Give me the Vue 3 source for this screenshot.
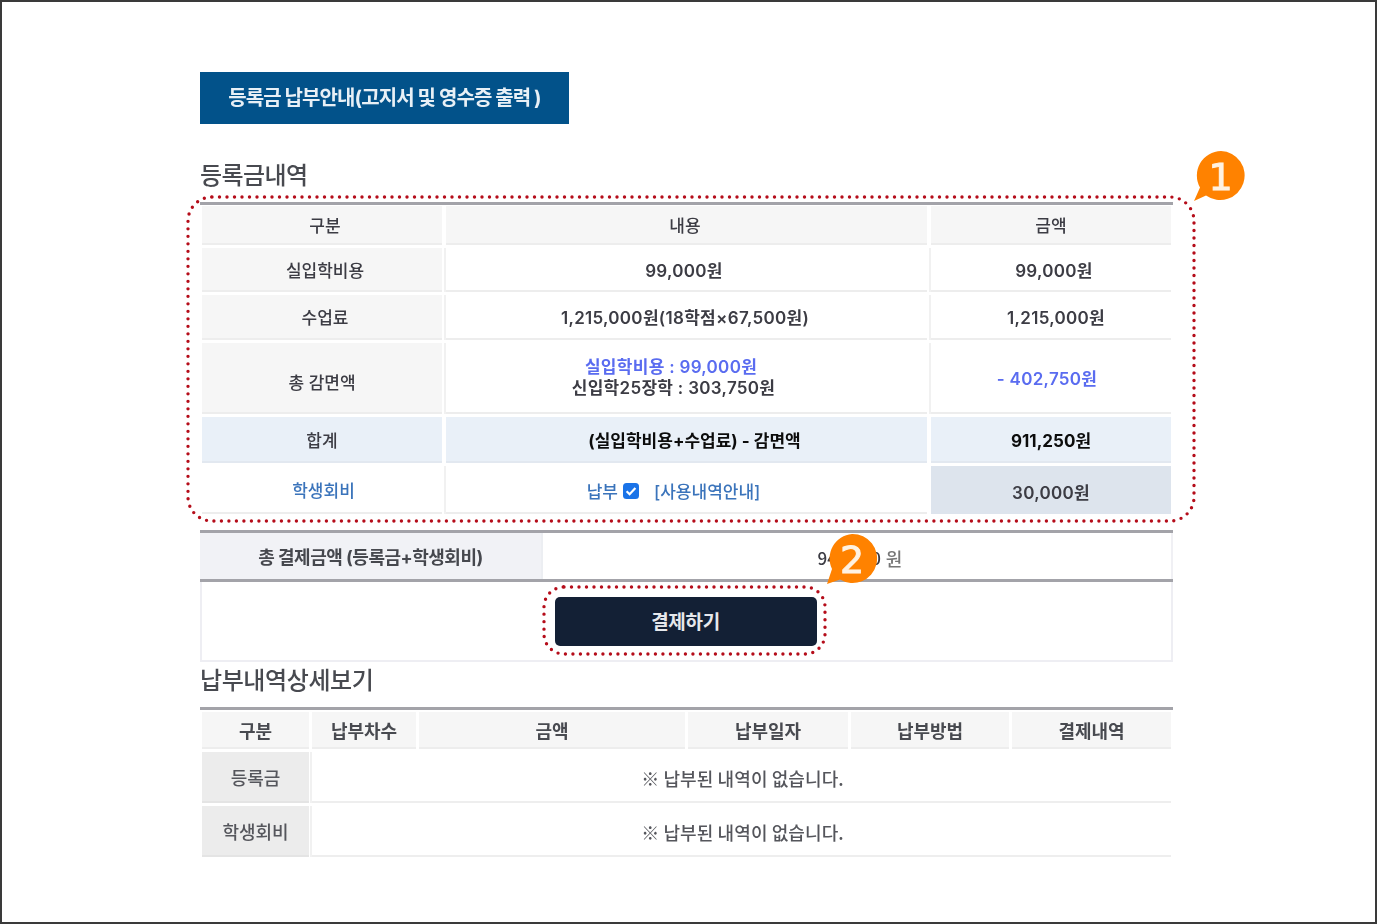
<script setup>
const feeRows = [
  { label: '실입학비용', content: '99,000원', amount: '99,000원', contentCls: 'shift-l5', amountCls: 'shift-r6' },
  { label: '수업료', content: '1,215,000원(18학점×67,500원)', amount: '1,215,000원', contentCls: 'shift-l3', amountCls: 'shift-r10' },
]
const histHead = ['구분', '납부차수', '금액', '납부일자', '납부방법', '결제내역']
</script>

<template>
  <div class="page">
    <div class="banner">등록금 납부안내(고지서 및 영수증 출력 )</div>
    <h2 class="title first">등록금내역</h2>

    <div class="fee-wrap">
      <div class="fee">
        <div class="c head shift-r6">구분</div>
        <div class="c head shift-l3">내용</div>
        <div class="c head">금액</div>
        <template v-for="row in feeRows" :key="row.label">
          <div class="c th shift-r6">{{ row.label }}</div>
          <div class="c td val" :class="row.contentCls">{{ row.content }}</div>
          <div class="c td val" :class="row.amountCls">{{ row.amount }}</div>
        </template>
        <div class="c th low">총 감면액</div>
        <div class="c td val stack">
          <span class="blue nudge">실입학비용 : 99,000원</span>
          <span>신입학25장학 : 303,750원</span>
        </div>
        <div class="c td val blue shift-l8">- 402,750원</div>
        <div class="c sum">합계</div>
        <div class="c sum strong shift-r16">(실입학비용+수업료) - 감면액</div>
        <div class="c sum strong">911,250원</div>
        <div class="c td flat link shift-r3">학생회비</div>
        <div class="c td link pay">
          <span>납부</span>
          <span class="check"><svg viewBox="0 0 16 16" width="16" height="16"><rect width="16" height="16" rx="3.500" fill="#1a73e8"/><path d="M3.600 8.200l3 3 5.800-6.200" fill="none" stroke="#fff" stroke-width="2.200"/></svg></span>
          <span class="guide">[사용내역안내]</span>
        </div>
        <div class="c shade val">30,000원</div>
      </div>
      <svg class="dots box1" width="1010" height="328" viewBox="0 0 1010 328">
        <rect x="2" y="2" width="1006" height="324" rx="24" />
      </svg>
      <svg class="bubble b1" viewBox="0 0 52 52" width="52" height="52">
        <path d="M28 1a24.500 24.500 0 1 1-15 44.500L1 51l6-13.500A24.500 24.500 0 0 1 28 1z" fill="#ff8200"/>
        <text x="27.500" y="40" text-anchor="middle" class="num">1</text>
      </svg>
    </div>

    <div class="total">
      <div class="total-label">총 결제금액 (등록금+학생회비)</div>
      <div class="total-value"><span class="dark">941,250</span><span class="won">원</span></div>
      <svg class="bubble b2" viewBox="0 0 52 52" width="52" height="52">
        <path d="M26 1a24.500 24.500 0 1 1-12 45.500L1 51l5-15A24.500 24.500 0 0 1 26 1z" fill="#ff8200"/>
        <text x="26" y="40" text-anchor="middle" class="num">2</text>
      </svg>
    </div>
    <div class="action">
      <button class="pay-btn" type="button">결제하기</button>
      <svg class="dots box2" width="285" height="71" viewBox="0 0 285 71">
        <rect x="2" y="2" width="281" height="67" rx="20" />
      </svg>
    </div>

    <h2 class="title second">납부내역상세보기</h2>
    <div class="hist">
      <div v-for="h in histHead" :key="h" class="c head soft">{{ h }}</div>
      <div class="c side">등록금</div>
      <div class="c none">※ 납부된 내역이 없습니다.</div>
      <div class="c side">학생회비</div>
      <div class="c none">※ 납부된 내역이 없습니다.</div>
    </div>
  </div>
</template>

<style>
html, body { margin: 0; background: #fff; }
</style>

<style scoped>
.page {
  box-sizing: border-box;
  width: 1377px;
  height: 924px;
  border: 2px solid #3a3a3a;
  padding: 70px 0 0 198px;
  font-family: Inter, "Noto Sans CJK KR", sans-serif;
  color: #3c3c44;
  overflow: hidden;
  filter: blur(0.35px);
}
.banner {
  width: 369px;
  height: 52px;
  background: #02528a;
  color: #e8f0f6;
  font-size: 20px;
  font-weight: 700;
  letter-spacing: -0.9px;
  line-height: 52px;
  text-align: center;
}
.title {
  margin: 0;
  font-size: 24px;
  font-weight: 500;
  line-height: 30px;
  letter-spacing: -0.6px;
  color: #484a50;
}
.title.first { margin-top: 37px; }
.fee-wrap { position: relative; width: 973px; margin-top: 11px; }
.fee {
  display: grid;
  width: 969px;
  grid-template-columns: 240px 481px 240px;
  grid-template-rows: 39px 44px 45px 71px 46px 48px;
  column-gap: 4px;
  row-gap: 3px;
  padding: 1px 2px 0;
  border-top: 3px solid #a3a3a9;
}
.c {
  display: flex;
  align-items: center;
  justify-content: center;
  box-sizing: border-box;
  font-size: 17px;
  font-weight: 500;
}
.head, .th { background: #f6f6f6; border-bottom: 2px solid #ededed; }
.td { background: #fff; border-bottom: 2px solid #ededed; box-shadow: -2px 0 0 #f1f1f1; }
.flat { box-shadow: none; }
.val { font-weight: 600; letter-spacing: 0.3px; }
.low { padding-top: 7px; }
.stack { flex-direction: column; line-height: 21px; padding-right: 26px; }
.nudge { margin-right: 5px; }
.blue { color: #5a6cf0; }
.sum { background: #e9f0f8; border-bottom: 2px solid #e2e8f0; }
.strong { color: #0c0c0c; font-weight: 700; }
.link { color: #3b74bb; }
.pay { gap: 5px; padding: 3px 26px 0 0; }
.check { display: inline-flex; }
.guide { margin-left: 10px; }
.shade { background: #dde4ed; padding-top: 3px; }
.shift-r3 { padding-left: 3px; }
.shift-r6 { padding-left: 6px; }
.shift-r10 { padding-left: 10px; }
.shift-r16 { padding-left: 16px; }
.shift-l3 { padding-right: 3px; }
.shift-l5 { padding-right: 5px; }
.shift-l8 { padding-right: 8px; }
.dots { position: absolute; pointer-events: none; overflow: visible; }
.dots rect {
  fill: none;
  stroke: #b50d1a;
  stroke-width: 3.400;
  stroke-linecap: round;
  stroke-dasharray: 0 7.500;
}
.box1 { left: -14px; top: -7px; }
.bubble { position: absolute; }
.b1 { left: 993px; top: -52px; }
.num {
  font-family: "DejaVu Sans", sans-serif;
  font-weight: 400;
  font-size: 38px;
  fill: #fff2e2;
  stroke: #fff2e2;
  stroke-width: 1;
}
.total {
  position: relative;
  display: flex;
  width: 973px;
  height: 52px;
  margin-top: 16px;
  box-sizing: border-box;
  border-top: 3px solid #a3a3a9;
  border-bottom: 3px solid #a3a3a9;
}
.total-label {
  display: flex;
  align-items: center;
  justify-content: center;
  width: 341px;
  background: #f1f2f6;
  border-right: 2px solid #eceef2;
  font-size: 18px;
  font-weight: 700;
  letter-spacing: -0.5px;
  color: #46484e;
}
.total-value {
  flex: 1;
  display: flex;
  align-items: center;
  justify-content: center;
  gap: 5px;
  padding: 3px 0 0 6px;
  font-family: "Noto Sans CJK KR", sans-serif;
  font-size: 17px;
  font-weight: 500;
  border-right: 2px solid #f0f0f4;
}
.won { color: #777; font-size: 18px; }
.b2 { left: 626px; top: 0; }
.action {
  position: relative;
  box-sizing: border-box;
  display: flex;
  justify-content: center;
  width: 973px;
  height: 80px;
  padding: 15px 2px 0 0;
  border: 2px solid #eeeef3;
  border-top: 0;
}
.pay-btn {
  width: 262px;
  height: 49px;
  padding: 0 0 3px;
  border: 0;
  border-radius: 5px;
  background: #132035;
  color: #e6e8ec;
  font-family: inherit;
  font-size: 19px;
  font-weight: 700;
  letter-spacing: -0.3px;
}
.box2 { left: 340px; top: 3px; }
.title.second { margin-top: 4px; letter-spacing: -0.4px; }
.hist {
  display: grid;
  width: 969px;
  grid-template-columns: 107px 104px 266px 160px 158px 159px;
  grid-template-rows: 37px 51px 51px;
  column-gap: 3px;
  row-gap: 3px;
  margin-top: 11px;
  padding: 2px 2px 0;
  border-top: 3px solid #a3a3a9;
}
.soft { font-size: 18px; font-weight: 700; color: #484a50; }
.side { background: #ececec; font-size: 18px; color: #55565c; border-bottom: 2px solid #e4e4e4; }
.none {
  grid-column: 2 / -1;
  padding: 2px 0 0 2px;
  border-bottom: 2px solid #eeeeee;
  box-shadow: -2px 0 0 #f1f1f1;
  font-family: "Noto Sans CJK KR", sans-serif;
  font-size: 18px;
  color: #55565c;
  letter-spacing: 0.1px;
}
</style>
